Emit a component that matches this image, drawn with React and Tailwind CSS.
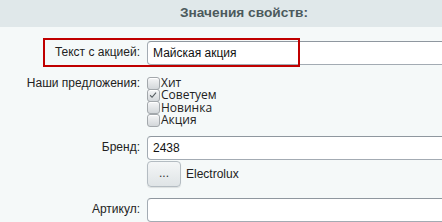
import React from "react";

function Checkbox({ checked, label }) {
  return (
    <div className="flex items-center h-[12.3px]">
      <span className="relative w-[13px] h-[13px] rounded-[3px] border border-[#a3a8ac] bg-gradient-to-b from-[#f5f6f7] to-[#d3d7da] shadow-[inset_0_1px_0_#fff] shrink-0">
        {checked && (
          <svg viewBox="0 0 13 13" className="absolute inset-0 w-[11px] h-[11px]">
            <path d="M2.5 6.2 L4.8 8.6 L9.5 3" fill="none" stroke="#555c60" strokeWidth="1.3" />
          </svg>
        )}
      </span>
      <span className="ml-[1px] text-[12px] leading-none text-[#222]" style={{ fontFamily: "'Open Sans', 'Liberation Sans', sans-serif" }}>{label}</span>
    </div>
  );
}

function Input({ value, className = "" }) {
  return (
    <div className={"w-[320px] h-[24px] bg-white border border-[#a3abb3] border-t-[#8f979f] rounded-[4px] flex items-center px-[5px] text-[12px] text-[#111] " + className}>
      {value}
    </div>
  );
}

export default function App() {
  return (
    <div className="relative w-[442px] h-[222px] overflow-hidden bg-[#f5f9f9]" style={{ fontFamily: "'Liberation Sans', Arial, sans-serif" }}>
      <div className="h-[27px] bg-[#e0e8ea] flex items-center justify-center pl-[46px] text-[13.7px] font-bold text-[#4c5a5d]">
        Значения свойств:
      </div>

      <div className="grid grid-cols-[147px_1fr] mt-[14px] text-[12px] text-[#222]">
        <div className="text-right pr-[7px] pt-[4px] leading-[15px]">Текст с акцией:</div>
        <Input value="Майская акция" />

        <div className="text-right pr-[7px] mt-[12px] pt-[0px] leading-[13px]">Наши предложения:</div>
        <div className="mt-[12px] flex flex-col">
          <Checkbox label="Хит" />
          <Checkbox checked label="Советуем" />
          <Checkbox label="Новинка" />
          <Checkbox label="Акция" />
        </div>

        <div className="text-right pr-[7px] mt-[10px] pt-[4px] leading-[15px]">Бренд:</div>
        <div className="mt-[10px] flex flex-col">
          <Input value="2438" className="h-[23px]" />
          <div className="flex items-center mt-[1px]">
            <div className="w-[34px] h-[26px] rounded-[4px] border border-[#b4bcc2] bg-gradient-to-b from-[#f4f6f7] to-[#dfe4e6] shadow-[0_1px_1px_rgba(0,0,0,0.1)] flex items-center justify-center text-[12px] text-[#333] pb-[3px]">...</div>
            <span className="ml-[5px] text-[#222]">Electrolux</span>
          </div>
        </div>

        <div className="text-right pr-[7px] mt-[11px] pt-[4px] leading-[15px]">Артикул:</div>
        <Input value="" className="mt-[11px]" />
      </div>

      <div className="absolute left-[43px] top-[38px] w-[257px] h-[29px] border-2 border-[#c00000]" />
    </div>
  );
}
